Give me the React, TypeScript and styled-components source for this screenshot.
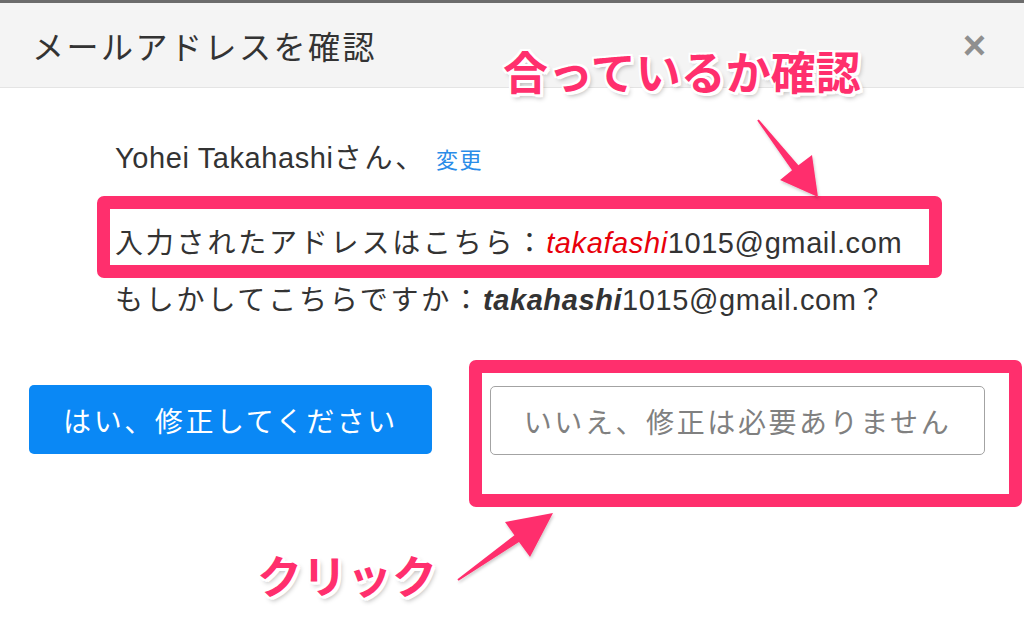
import React from "react";
import styled, { createGlobalStyle } from "styled-components";

const PINK = "#ff2f6d";

const Global = createGlobalStyle`
  html, body { margin: 0; padding: 0; background: #fff; }
  body {
    width: 1024px; height: 617px; overflow: hidden;
    font-family: "Liberation Sans", "Noto Sans CJK JP", sans-serif;
    color: #333;
  }
`;

const Page = styled.div`
  position: relative;
  width: 1024px;
  height: 617px;
  background: #fff;
`;

const TopStrip = styled.div`
  height: 3px;
  background: #6c6c6c;
`;

const Header = styled.header`
  height: 85px;
  box-sizing: border-box;
  background: #f4f4f4;
  border-bottom: 1px solid #e4e4e4;
  display: flex;
  align-items: center;
  justify-content: space-between;
  padding: 0 38px 0 32px;
`;

const Title = styled.h1`
  margin: 0;
  font-family: "Noto Sans CJK JP", sans-serif;
  font-weight: 400;
  font-size: 32px;
  letter-spacing: 2.5px;
  color: #333;
`;

const Close = styled.span`
  font-family: "Liberation Sans", sans-serif;
  font-size: 40px;
  font-weight: 700;
  color: #8f8f8f;
  line-height: 1;
`;

const Body = styled.main`
  padding-top: 41px;
`;

const Message = styled.div`
  padding-left: 115px;
  font-size: 28px;
  line-height: 55px;
  color: #333;
`;

const Greeting = styled.div`
  display: flex;
  align-items: baseline;
  margin-bottom: 28px;
`;

const Line = styled.div`
  white-space: nowrap;
`;

const Ja = styled.span`
  font-family: "Noto Sans CJK JP", sans-serif;
  letter-spacing: 2.8px;
`;

const Latin = styled.span<{ $red?: boolean; $bold?: boolean; $italic?: boolean }>`
  font-family: "Liberation Sans", sans-serif;
  font-size: 29px;
  letter-spacing: 0.6px;
  color: ${(p) => (p.$red ? "#e8000b" : "#333")};
  font-weight: ${(p) => (p.$bold ? 700 : 400)};
  font-style: ${(p) => (p.$italic ? "italic" : "normal")};
`;

const ChangeLink = styled.a`
  margin-left: 10px;
  font-family: "Noto Sans CJK JP", sans-serif;
  font-size: 22px;
  letter-spacing: 1.5px;
  color: #2a8ce8;
  text-decoration: none;
`;

const Actions = styled.div`
  display: flex;
  gap: 58px;
  padding-left: 29px;
  margin-top: 57px;
`;

const Button = styled.button<{ $primary?: boolean }>`
  height: 69px;
  width: ${(p) => (p.$primary ? "403px" : "495px")};
  box-sizing: border-box;
  border-radius: 5px;
  font-family: "Noto Sans CJK JP", sans-serif;
  font-size: 28px;
  letter-spacing: 2.6px;
  padding: 0;
  background: ${(p) => (p.$primary ? "#0a88f5" : "#fff")};
  color: ${(p) => (p.$primary ? "#fff" : "#808080")};
  border: ${(p) => (p.$primary ? "none" : "1.5px solid #a3a3a3")};
  margin-top: ${(p) => (p.$primary ? "0" : "1px")};
`;

const Frame = styled.div<{ $l: number; $t: number; $w: number; $h: number }>`
  position: absolute;
  left: ${(p) => p.$l}px;
  top: ${(p) => p.$t}px;
  width: ${(p) => p.$w}px;
  height: ${(p) => p.$h}px;
  box-sizing: border-box;
  border: 13px solid ${PINK};
  border-radius: 7px;
  pointer-events: none;
`;

const Callout = styled.div<{ $l: number; $t: number }>`
  position: absolute;
  left: ${(p) => p.$l}px;
  top: ${(p) => p.$t}px;
  font-family: "Noto Sans CJK JP", sans-serif;
  font-weight: 700;
  font-size: 45px;
  line-height: 1;
  white-space: nowrap;
  color: ${PINK};
  text-shadow:
    2px 0 0 #fff, -2px 0 0 #fff, 0 2px 0 #fff, 0 -2px 0 #fff,
    2px 2px 0 #fff, -2px -2px 0 #fff, 2px -2px 0 #fff, -2px 2px 0 #fff,
    3px 3px 0 #fff, 1px 3px 0 #fff, 3px 1px 0 #fff,
    3px 4px 5px rgba(0, 0, 0, 0.3);
`;

const Overlay = styled.svg`
  position: absolute;
  left: 0;
  top: 0;
  pointer-events: none;
`;

export default function App() {
  return (
    <Page>
      <Global />
      <TopStrip />
      <Header>
        <Title>メールアドレスを確認</Title>
        <Close>×</Close>
      </Header>
      <Body>
        <Message>
          <Greeting>
            <Latin>Yohei Takahashi</Latin>
            <Ja>さん、</Ja>
            <ChangeLink href="#">変更</ChangeLink>
          </Greeting>
          <Line>
            <Ja>入力されたアドレスはこちら：</Ja>
            <Latin $red $italic>takafashi</Latin>
            <Latin>1015@gmail.com</Latin>
          </Line>
          <Line>
            <Ja>もしかしてこちらですか：</Ja>
            <Latin $bold $italic>takahashi</Latin>
            <Latin>1015@gmail.com</Latin>
            <Ja>？</Ja>
          </Line>
        </Message>
        <Actions>
          <Button $primary>はい、修正してください</Button>
          <Button>いいえ、修正は必要ありません</Button>
        </Actions>
      </Body>

      <Frame $l={97} $t={196} $w={845} $h={82} />
      <Frame $l={469} $t={360} $w={553} $h={147} />

      <Overlay width="1024" height="617" viewBox="0 0 1024 617">
        <defs>
          <filter id="sh" x="-20%" y="-20%" width="140%" height="140%">
            <feDropShadow dx="1" dy="2" stdDeviation="1.5" floodColor="#000" floodOpacity="0.2" />
          </filter>
        </defs>
        <polygon
          filter="url(#sh)"
          fill={PINK}
          points="757.2,120.6 792,170.2 780,180 818,197 812,155 798.4,165.2 758.8,119.4"
        />
        <polygon
          filter="url(#sh)"
          fill={PINK}
          points="457.4,579.2 514.4,535.3 505,522 553,513 530,557 519,541.9 458.6,580.8"
        />
      </Overlay>

      <Callout $l={503} $t={48}>合っているか確認</Callout>
      <Callout $l={257} $t={552}>クリック</Callout>
    </Page>
  );
}
